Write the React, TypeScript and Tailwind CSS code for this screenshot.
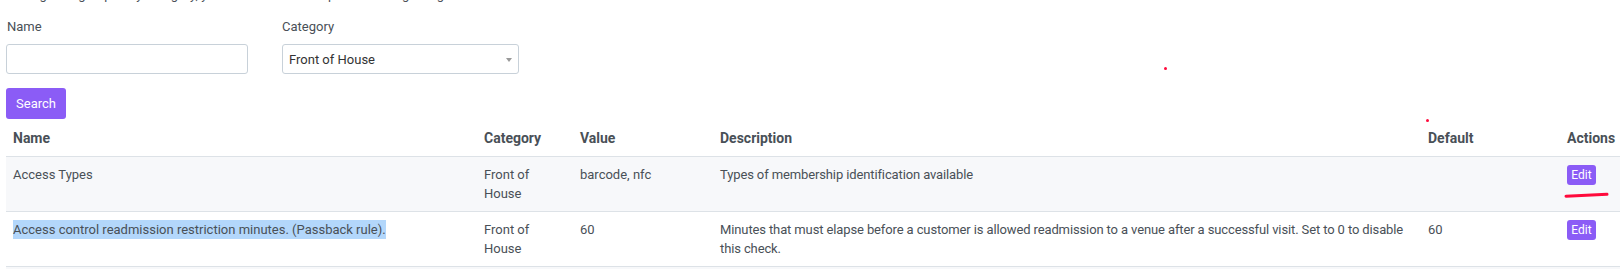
import React from "react";

const rows = [
  {
    name: "Access Types",
    selected: false,
    value: "barcode, nfc",
    description: "Types of membership identification available",
    def: "",
  },
  {
    name: "Access control readmission restriction minutes. (Passback rule).",
    selected: true,
    value: "60",
    description:
      "Minutes that must elapse before a customer is allowed readmission to a venue after a successful visit. Set to 0 to disable this check.",
    def: "60",
  },
];

export default function App() {
  return (
    <div
      className="relative h-[269px] w-[1620px] overflow-hidden bg-white text-[13px] leading-[19px] text-[#495057]"
      style={{ fontFamily: "Roboto, 'Liberation Sans', sans-serif" }}
    >
      <div className="px-[6px]">
        <p className="mt-[-15px] text-[#495057]">
          Settings are grouped by category, you can search for a specific setting using the filters below.
        </p>

        <div className="mt-[13px] flex gap-[34px]">
          <div className="flex w-[242px] flex-col">
            <label className="mb-[8px] pl-[1px] leading-[19px]">Name</label>
            <input
              type="text"
              className="h-[30px] w-full rounded-[3px] border border-[#c8d1d9] bg-white px-[6px] outline-none"
            />
          </div>
          <div className="flex w-[237px] flex-col">
            <label className="mb-[8px] leading-[19px]">Category</label>
            <div className="relative flex h-[30px] w-full items-center rounded-[3px] border border-[#c8d1d9] bg-white pl-[6px] text-[#333]">
              <span>Front of House</span>
              <span className="absolute right-[6px] top-[13px] h-0 w-0 border-x-[3px] border-t-[4px] border-x-transparent border-t-[#999]" />
            </div>
          </div>
        </div>

        <button className="mt-[14px] flex h-[31px] w-[60px] items-center justify-center rounded-[3px] bg-[#8b5cf6] text-white">
          Search
        </button>
      </div>

      <table className="ml-[6px] mt-[3px] w-[1615px] table-fixed border-collapse">
        <colgroup>
          <col className="w-[471px]" />
          <col className="w-[96px]" />
          <col className="w-[140px]" />
          <col className="w-[708px]" />
          <col className="w-[139px]" />
          <col className="w-[61px]" />
        </colgroup>
        <thead>
          <tr className="border-b border-[#dde2e7] text-left text-[14px] leading-[20px]">
            <th className="px-[7px] pb-[8px] pt-[6px] font-bold">Name</th>
            <th className="px-[7px] pb-[8px] pt-[6px] font-bold">Category</th>
            <th className="px-[7px] pb-[8px] pt-[6px] font-bold">Value</th>
            <th className="px-[7px] pb-[8px] pt-[6px] font-bold">Description</th>
            <th className="px-[7px] pb-[8px] pt-[6px] font-bold">Default</th>
            <th className="whitespace-nowrap px-[7px] pb-[8px] pt-[6px] font-bold">Actions</th>
          </tr>
        </thead>
        <tbody>
          {rows.map((r, i) => (
            <tr
              key={i}
              className={`border-b border-[#dde2e7] align-top ${i % 2 === 0 ? "bg-[#f7f8fa]" : "bg-white"}`}
            >
              <td className="px-[7px] pb-[8px] pt-[8px]">
                {r.selected ? (
                  <span className="bg-[#b3d7fb] py-[2px]">{r.name}</span>
                ) : (
                  r.name
                )}
              </td>
              <td className="px-[7px] pb-[8px] pt-[8px]">
                Front of
                <br />
                House
              </td>
              <td className="px-[7px] pb-[8px] pt-[8px]">{r.value}</td>
              <td className="pb-[8px] pl-[7px] pr-0 pt-[8px] tracking-[-0.12px]">{r.description}</td>
              <td className="px-[7px] pb-[8px] pt-[8px]">{r.def}</td>
              <td className="px-[7px] pb-[8px] pt-[8px]">
                <button className="flex h-[20px] w-[29px] items-center justify-center rounded-[3px] bg-[#8b5cf6] text-[12px] leading-[16px] text-white">
                  Edit
                </button>
              </td>
            </tr>
          ))}
          <tr className="bg-[#f7f8fa]">
            <td className="h-[54px]" colSpan={6} />
          </tr>
        </tbody>
      </table>

      {/* red annotation marks */}
      <span className="absolute left-[1164px] top-[67px] h-[3px] w-[3px] rounded-full bg-[#ff0a3c]" />
      <span className="absolute left-[1426px] top-[119px] h-[3px] w-[3px] rounded-full bg-[#ff0a3c]" />
      <svg className="absolute left-[1564px] top-[191px]" width="46" height="8" viewBox="0 0 46 8">
        <path d="M2 5.2 L43 3.2" stroke="#ff0a3c" strokeWidth="3" strokeLinecap="round" />
      </svg>
    </div>
  );
}
